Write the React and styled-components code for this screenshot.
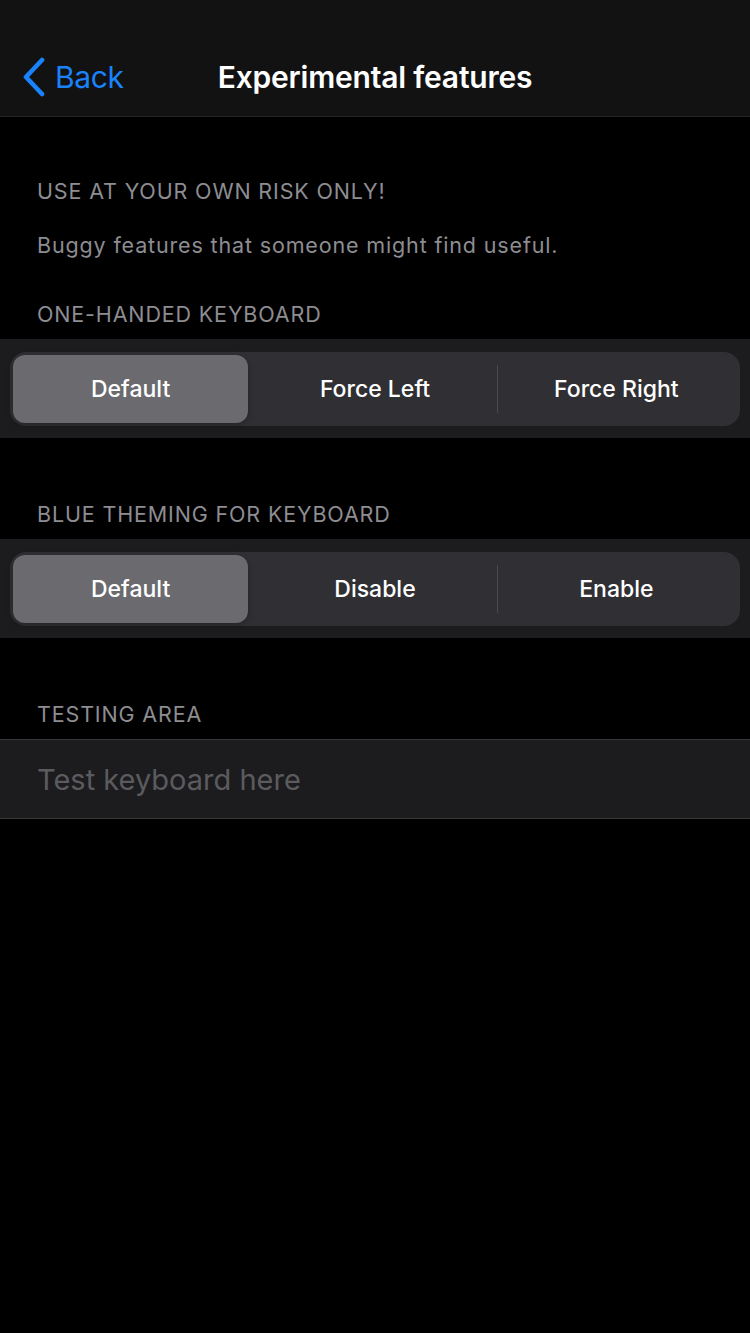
import React from 'react';
import styled, { createGlobalStyle } from 'styled-components';

const GlobalStyle = createGlobalStyle`
  html, body {
    margin: 0;
    padding: 0;
    background: #000;
  }
  body {
    font-family: Inter, "Noto Sans", "Liberation Sans", sans-serif;
    -webkit-font-smoothing: antialiased;
  }
`;

const Screen = styled.div`
  width: 750px;
  min-height: 1333px;
  background: #000;
  color: #fff;
`;

const NavBar = styled.header`
  position: relative;
  height: 117px;
  background: #121212;
  border-bottom: 1px solid #262628;
  box-sizing: border-box;
  display: flex;
  align-items: flex-end;
  justify-content: center;
  padding-bottom: 19px;
`;

const BackButton = styled.button`
  position: absolute;
  left: 22px;
  bottom: 19px;
  display: flex;
  align-items: center;
  gap: 9px;
  background: none;
  border: none;
  padding: 0;
  color: #1a82fb;
  font-family: inherit;
  font-size: 30px;
  letter-spacing: -0.4px;
  cursor: pointer;
`;

const Title = styled.h1`
  margin: 0;
  font-size: 30px;
  font-weight: 600;
  letter-spacing: -0.2px;
  line-height: 40px;
`;

const Content = styled.main`
  padding-top: 60px;
`;

const SectionHeader = styled.div`
  padding: 0 37px;
  font-size: 21.5px;
  letter-spacing: 0.85px;
  color: #8d8d92;
  line-height: 28px;
  margin-bottom: ${p => p.gap || 11}px;
`;

const Footer = styled.p`
  margin: 0 0 41px;
  padding: 0 37px;
  font-size: 21.5px;
  letter-spacing: 0.85px;
  line-height: 28px;
  color: #8d8d92;
`;

const Group = styled.section`
  background: #1c1c1e;
  padding: 13px 10px 12px;
  margin-bottom: ${p => p.after || 0}px;
`;

const Segmented = styled.div`
  display: grid;
  grid-template-columns: 1fr 1fr 1fr;
  background: #303034;
  border-radius: 16px;
  padding: 3px;
  height: 74px;
  box-sizing: border-box;
`;

const Segment = styled.button`
  position: relative;
  border: none;
  border-radius: 12px;
  background: ${p => (p.active ? '#6a6a6f' : 'transparent')};
  box-shadow: ${p => (p.active ? '0 2px 6px rgba(0,0,0,0.25)' : 'none')};
  color: #fff;
  font-family: inherit;
  font-size: 23px;
  font-weight: 500;
  margin-right: ${p => (p.active ? 6 : 0)}px;
  padding: 0;
  cursor: pointer;

  &::after {
    content: '';
    display: ${p => (p.divider ? 'block' : 'none')};
    position: absolute;
    right: -2px;
    top: 10px;
    bottom: 10px;
    width: 1px;
    background: #4a4a4e;
  }
`;

const InputRow = styled.div`
  background: #1c1c1e;
  border-top: 1px solid #38383a;
  border-bottom: 1px solid #38383a;
  height: 80px;
  box-sizing: border-box;
  display: flex;
  align-items: center;
  padding: 0 37px;
`;

const TestInput = styled.input`
  flex: 1;
  background: transparent;
  border: none;
  outline: none;
  color: #fff;
  font-family: inherit;
  font-size: 29px;
  padding: 0;

  &::placeholder {
    color: #5b5b5f;
  }
`;

const Chevron = () => (
  <svg width="24" height="40" viewBox="0 0 24 40" fill="none">
    <path d="M20 3 L4 20 L20 37" stroke="#1a82fb" strokeWidth="4.6" strokeLinecap="round" strokeLinejoin="round" />
  </svg>
);

const SegmentedControl = ({ options, selected = 0 }) => (
  <Segmented>
    {options.map((opt, i) => {
      const divider = i < options.length - 1 && i !== selected && i + 1 !== selected;
      return (
        <Segment key={opt} active={i === selected} divider={divider}>
          {opt}
        </Segment>
      );
    })}
  </Segmented>
);

const App = () => {
  return (
    <>
      <GlobalStyle />
      <Screen>
        <NavBar>
          <BackButton>
            <Chevron />
            Back
          </BackButton>
          <Title>Experimental features</Title>
        </NavBar>
        <Content>
          <SectionHeader gap={26}>USE AT YOUR OWN RISK ONLY!</SectionHeader>
          <Footer>Buggy features that someone might find useful.</Footer>

          <SectionHeader>ONE-HANDED KEYBOARD</SectionHeader>
          <Group after={62}>
            <SegmentedControl options={['Default', 'Force Left', 'Force Right']} />
          </Group>

          <SectionHeader>BLUE THEMING FOR KEYBOARD</SectionHeader>
          <Group after={62}>
            <SegmentedControl options={['Default', 'Disable', 'Enable']} />
          </Group>

          <SectionHeader>TESTING AREA</SectionHeader>
          <InputRow>
            <TestInput placeholder="Test keyboard here" />
          </InputRow>
        </Content>
      </Screen>
    </>
  );
};

export default App;
